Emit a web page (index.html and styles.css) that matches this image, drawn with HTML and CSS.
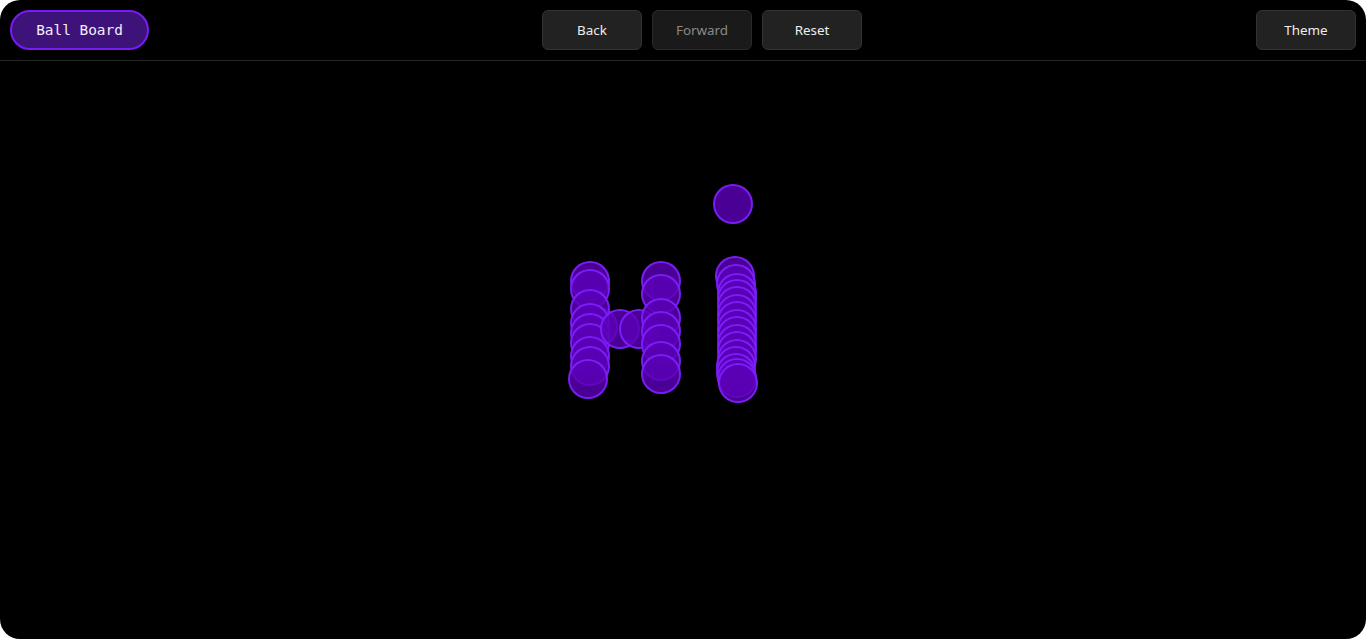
FILE: index.html
```html
<!DOCTYPE html>
<html lang="en">
<head>
<meta charset="utf-8">
<title>Ball Board</title>
<link rel="stylesheet" href="styles.css">
</head>
<body>
<div class="app">
  <header class="topbar">
    <div class="brand">Ball Board</div>
    <nav class="history">
      <button class="btn">Back</button>
      <button class="btn btn-disabled">Forward</button>
      <button class="btn">Reset</button>
    </nav>
    <div class="actions">
      <button class="btn">Theme</button>
    </div>
  </header>
  <main class="board">
    <div class="ball" style="left:713px;top:123px"></div>

    <div class="ball" style="left:578px;top:246px"></div>
    <div class="ball" style="left:570px;top:200px"></div>
    <div class="ball" style="left:570px;top:208px"></div>
    <div class="ball" style="left:570px;top:228px"></div>
    <div class="ball" style="left:570px;top:242px"></div>
    <div class="ball" style="left:570px;top:252px"></div>
    <div class="ball" style="left:570px;top:262px"></div>
    <div class="ball" style="left:570px;top:275px"></div>
    <div class="ball" style="left:570px;top:285px"></div>
    <div class="ball" style="left:568px;top:298px"></div>

    <div class="ball" style="left:600px;top:248px"></div>
    <div class="ball" style="left:619px;top:248px"></div>

    <div class="ball" style="left:641px;top:200px"></div>
    <div class="ball" style="left:641px;top:213px"></div>
    <div class="ball" style="left:641px;top:237px"></div>
    <div class="ball" style="left:641px;top:250px"></div>
    <div class="ball" style="left:641px;top:263px"></div>
    <div class="ball" style="left:641px;top:280px"></div>
    <div class="ball" style="left:641px;top:293px"></div>

    <div class="ball" style="left:715px;top:195px"></div>
    <div class="ball" style="left:716px;top:203px"></div>
    <div class="ball" style="left:717px;top:212px"></div>
    <div class="ball" style="left:717px;top:218px"></div>
    <div class="ball" style="left:717px;top:225px"></div>
    <div class="ball" style="left:717px;top:233px"></div>
    <div class="ball" style="left:717px;top:240px"></div>
    <div class="ball" style="left:717px;top:248px"></div>
    <div class="ball" style="left:717px;top:255px"></div>
    <div class="ball" style="left:717px;top:263px"></div>
    <div class="ball" style="left:717px;top:270px"></div>
    <div class="ball" style="left:717px;top:278px"></div>
    <div class="ball" style="left:716px;top:285px"></div>
    <div class="ball" style="left:716px;top:292px"></div>
    <div class="ball" style="left:717px;top:297px"></div>
    <div class="ball" style="left:718px;top:302px"></div>
  </main>
</div>
</body>
</html>
```

FILE: styles.css
```css
* { box-sizing: border-box; }

html, body {
  margin: 0;
  padding: 0;
  background: #ffffff;
}

.app {
  width: 1366px;
  height: 639px;
  background: #000000;
  border-radius: 20px;
  overflow: hidden;
  display: flex;
  flex-direction: column;
  font-family: "Noto Sans", "Open Sans", sans-serif;
}

.topbar {
  height: 61px;
  flex: none;
  display: flex;
  align-items: center;
  justify-content: space-between;
  padding: 0 10px 1px;
  border-bottom: 1px solid #262626;
}

.brand {
  width: 139px;
  height: 40px;
  margin-right: -1px;
  border: 2px solid #7a1bf5;
  border-radius: 20px;
  background: #3d137a;
  color: #f2eefa;
  font-family: "DejaVu Sans Mono", "Liberation Mono", monospace;
  font-size: 14.4px;
  display: flex;
  align-items: center;
  justify-content: center;
}

.history {
  display: flex;
  gap: 10px;
}

.actions {
  display: flex;
}

.btn {
  width: 100px;
  height: 40px;
  border: 1px solid #333333;
  border-radius: 6px;
  background: #222222;
  color: #eeeeee;
  font-family: "Noto Sans", "Open Sans", sans-serif;
  font-size: 13.4px;
  padding: 0;
  cursor: pointer;
}

.btn-disabled {
  background: #1a1a1a;
  border-color: #2a2a2a;
  color: #8a8a8a;
}

.board {
  position: relative;
  flex: 1;
}

.ball {
  position: absolute;
  width: 40px;
  height: 40px;
  border-radius: 50%;
  border: 2px solid rgba(128, 32, 255, 0.9);
  background: rgba(90, 0, 180, 0.82);
}
```
